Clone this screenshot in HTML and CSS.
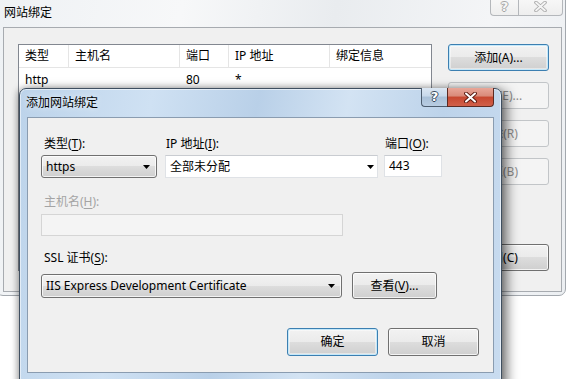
FILE: index.html
```html
<!doctype html>
<html lang="zh-CN">
  <head>
    <meta charset="UTF-8" />
    <meta name="viewport" content="width=device-width, initial-scale=1.0" />
    <title>添加网站绑定</title>
    <link rel="stylesheet" href="styles.css">
  </head>
  <body>
    <!-- 网站绑定 window (inactive, behind the dialog) -->
    <div class="window bg-window">
      <div class="caption">网站绑定</div>
      <div class="caption-buttons inactive">
        <span class="cap-btn help">?</span>
        <span class="cap-btn close">
          <svg width="13" height="11" viewBox="0 0 13 11">
            <path d="M2 1.5 L11 9.5 M11 1.5 L2 9.5" stroke="#a9a9a9" stroke-width="3.6" stroke-linecap="round" />
            <path d="M2 1.5 L11 9.5 M11 1.5 L2 9.5" stroke="#f4f4f4" stroke-width="1.8" stroke-linecap="round" />
          </svg>
        </span>
      </div>
      <div class="client bindings">
        <div class="listview">
          <div class="lv-row lv-head">
            <span>类型</span><span>主机名</span><span>端口</span><span>IP 地址</span><span>绑定信息</span>
          </div>
          <div class="lv-body">
            <div class="lv-row">
              <span>http</span><span></span><span>80</span><span>*</span><span></span>
            </div>
          </div>
        </div>
        <div class="side-buttons">
          <button class="btn default">添加(A)...</button>
          <button class="btn" disabled>编辑(E)...</button>
          <button class="btn" disabled>删除(R)</button>
          <button class="btn" disabled>浏览(B)</button>
          <button class="btn close-btn">关闭(C)</button>
        </div>
      </div>
    </div>

    <!-- 添加网站绑定 dialog -->
    <div class="window dialog">
      <div class="caption">添加网站绑定</div>
      <div class="caption-buttons">
        <span class="cap-btn help">?</span>
        <span class="cap-btn close">
          <svg width="13" height="11" viewBox="0 0 13 11">
            <path d="M2 1.5 L11 9.5 M11 1.5 L2 9.5" stroke="#5a1a10" stroke-width="3.8" stroke-linecap="round" />
            <path d="M2 1.5 L11 9.5 M11 1.5 L2 9.5" stroke="#ffffff" stroke-width="2" stroke-linecap="round" />
          </svg>
        </span>
      </div>
      <div class="client dlg-body">
        <div class="top-fields">
          <div class="field type-field">
            <label class="first">类型(<u>T</u>):</label>
            <div class="combo">
              <span>https</span>
              <svg class="arrow" width="7" height="4" viewBox="0 0 7 4"><polygon points="0,0 7,0 3.5,4" fill="#000" /></svg>
            </div>
          </div>
          <div class="field ip-field">
            <label>IP 地址(<u>I</u>):</label>
            <div class="combo editable">
              <span>全部未分配</span>
              <svg class="arrow" width="7" height="4" viewBox="0 0 7 4"><polygon points="0,0 7,0 3.5,4" fill="#000" /></svg>
            </div>
          </div>
          <div class="field port-field">
            <label>端口(<u>O</u>):</label>
            <div class="textbox">443</div>
          </div>
        </div>

        <label class="first disabled host-label">主机名(<u>H</u>):</label>
        <div class="textbox host-box"></div>

        <label class="first ssl-label">SSL 证书(<u>S</u>):</label>
        <div class="ssl-row">
          <div class="combo ssl-combo">
            <span>IIS Express Development Certificate</span>
            <svg class="arrow" width="7" height="4" viewBox="0 0 7 4"><polygon points="0,0 7,0 3.5,4" fill="#000" /></svg>
          </div>
          <button class="btn view-btn">查看(<u>V</u>)...</button>
        </div>

        <div class="dlg-buttons">
          <button class="btn default">确定</button>
          <button class="btn">取消</button>
        </div>
      </div>
    </div>
  </body>
</html>
```

FILE: styles.css
```css
* {
  box-sizing: border-box;
}
body {
  margin: 0;
  width: 571px;
  height: 379px;
  overflow: hidden;
  position: relative;
  background: #ffffff;
  font-family: "Noto Sans", "Noto Sans CJK SC", sans-serif;
  font-size: 12px;
  line-height: 16px;
  color: #000;
}
u {
  text-decoration: underline;
  text-underline-offset: 2px;
}

/* window frames */
.window {
  position: absolute;
  display: flex;
  flex-direction: column;
}
.caption {
  white-space: nowrap;
}
.caption-buttons {
  position: absolute;
  display: flex;
}
.cap-btn {
  display: flex;
  align-items: center;
  justify-content: center;
  border: 1px solid #4c5c6e;
  border-top: none;
}
.cap-btn.help {
  border-right: none;
  border-radius: 0 0 0 4px;
  font-weight: bold;
  font-size: 13px;
  font-family: "DejaVu Sans", sans-serif;
  color: #fff;
  text-shadow: 1px 0 #3a4a5c, -1px 0 #3a4a5c, 0 1px #3a4a5c, 0 -1px #3a4a5c;
}
.cap-btn.close {
  border-radius: 0 0 4px 0;
}

/* background window */
.bg-window {
  left: -4px;
  top: -2px;
  width: 570px;
  height: 298px;
  padding: 0 3px 3px 6px;
  border: 1px solid #a3a8ae;
  border-radius: 0 0 7px 7px;
  background: linear-gradient(100deg, #eef1f4 0%, #f7f8f9 30%, #e9ecef 55%, #f4f5f7 80%, #eceff2 100%);
}
.bg-window .caption {
  height: 28px;
  padding: 6px 0 0 1px;
}
.bg-window .caption-buttons {
  top: -1px;
  right: 2px;
}
.inactive .cap-btn {
  height: 18px;
  border-color: #b4b7bb;
  background: linear-gradient(#f8f8f8, #eeeeee);
}
.inactive .cap-btn.help {
  width: 28px;
  color: #f6f6f6;
  text-shadow: 1px 0 #a6a6a6, -1px 0 #a6a6a6, 0 1px #a6a6a6, 0 -1px #a6a6a6;
}
.inactive .cap-btn.close {
  width: 45px;
}

.client {
  background: #f0f0f0;
  border: 1px solid #a7abb0;
}
.bindings {
  flex: 1;
  display: flex;
  gap: 16px;
  padding: 16px 12px 20px 14px;
}

/* list view */
.listview {
  width: 414px;
  background: #fff;
  border: 1px solid #828790;
}
.lv-row {
  display: grid;
  grid-template-columns: 50px 111px 49px 101px 1fr;
  line-height: 19px;
}
.lv-row span {
  padding-left: 6px;
  white-space: nowrap;
}
.lv-head {
  height: 23px;
  line-height: 21px;
  border-bottom: 1px solid #e5e5e5;
}
.lv-head span {
  border-right: 1px solid #e5e5e5;
}
.lv-head span:last-child {
  border-right: none;
}
.lv-body {
  padding-top: 2px;
}

.side-buttons {
  width: 101px;
  display: flex;
  flex-direction: column;
  gap: 11px;
}
.side-buttons .close-btn {
  margin-top: auto;
}

/* buttons */
.btn {
  font: inherit;
  line-height: 16px;
  color: #000;
  height: 27px;
  padding: 0;
  border: 1px solid #707070;
  border-radius: 3px;
  background: linear-gradient(#f2f2f2 0%, #ebebeb 49%, #dddddd 50%, #cfcfcf 100%);
  box-shadow: inset 0 0 0 1px rgba(255, 255, 255, 0.75);
}
.btn.default {
  border-color: #3c7fb1;
  box-shadow: inset 0 0 0 1px #c4e8fa, inset 0 0 0 2px rgba(255, 255, 255, 0.45);
}
.btn:disabled {
  color: #8d8d8d;
  border-color: #c2c5c8;
  background: #f4f4f4;
  box-shadow: none;
}

/* dialog */
.dialog {
  left: 19px;
  top: 88px;
  width: 483px;
  height: 300px;
  padding: 0 7px;
  border: 1px solid #3f4f60;
  border-radius: 7px 7px 0 0;
  background: linear-gradient(100deg, #bcd3ea 0%, #cfe1f3 25%, #b9d0e8 45%, #d3e3f3 62%, #bdd3ea 80%, #c9dcf0 100%);
  box-shadow: inset 0 0 0 1px rgba(255, 255, 255, 0.55), 5px 3px 12px rgba(0, 0, 0, 0.55), -2px 0 6px rgba(0, 0, 0, 0.25);
}
.dialog .caption {
  height: 28px;
  line-height: 28px;
  margin-left: -1px;
  text-shadow: 0 0 6px rgba(255, 255, 255, 0.9);
}
.dialog .caption-buttons {
  top: -1px;
  right: 7px;
}
.dialog .cap-btn {
  height: 19px;
}
.dialog .cap-btn.help {
  width: 26px;
  background: linear-gradient(#dbe6f2 0%, #c7d8ea 45%, #a9c0d8 50%, #b9cde2 100%);
}
.dialog .cap-btn.close {
  width: 47px;
  border-color: #5c2a22;
  background: linear-gradient(#e8a698 0%, #d98a79 45%, #c7472f 50%, #d0604a 100%);
}

.dlg-body {
  height: 256px;
  border-color: #8a9cb0;
  padding: 18px 14px 0 13px;
  display: flex;
  flex-direction: column;
}
label {
  display: block;
  white-space: nowrap;
}
label.first {
  padding-left: 3px;
}
label.disabled {
  color: #a4a4a4;
}

.top-fields {
  display: flex;
}
.field {
  display: flex;
  flex-direction: column;
  gap: 3px;
}
.field label {
  padding-left: 1px;
}
.field label.first {
  padding-left: 3px;
}
.type-field {
  width: 116px;
  margin-right: 8px;
}
.ip-field {
  width: 213px;
  margin-right: 6px;
}
.port-field {
  width: 58px;
}

.combo {
  height: 23px;
  display: flex;
  align-items: center;
  justify-content: space-between;
  padding: 0 6px 0 4px;
  border: 1px solid #707070;
  border-radius: 3px;
  background: linear-gradient(#f2f2f2 0%, #ebebeb 49%, #dddddd 50%, #cfcfcf 100%);
  box-shadow: inset 0 0 0 1px rgba(255, 255, 255, 0.75);
  white-space: nowrap;
}
.combo.editable {
  border: 1px solid #dfe2e6;
  border-top-color: #c9ccd1;
  border-radius: 0;
  background: #fff;
  box-shadow: none;
  padding-right: 3px;
}
.textbox {
  height: 22px;
  padding: 0 4px;
  line-height: 20px;
  background: #fff;
  border: 1px solid #dfe2e6;
  border-top-color: #c9ccd1;
}

.host-label {
  margin-top: 16px;
}
.host-box {
  width: 302px;
  margin-top: 4px;
  background: #f4f4f4;
  border-color: #d5d5d5;
}
.ssl-label {
  margin-top: 14px;
}
.ssl-row {
  margin-top: 6px;
  display: flex;
  align-items: center;
  gap: 10px;
}
.ssl-combo {
  width: 301px;
  height: 24px;
}
.view-btn {
  width: 85px;
}

.dlg-buttons {
  margin-top: 29px;
  display: flex;
  justify-content: flex-end;
  gap: 10px;
}
.dlg-buttons .btn {
  width: 91px;
  height: 28px;
}
```
